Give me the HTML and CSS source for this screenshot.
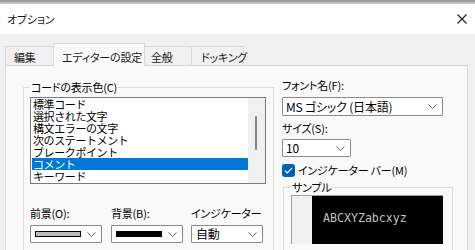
FILE: index.html
```html
<!DOCTYPE html>
<html lang="ja">
<head>
    <meta charset="UTF-8">
    <title>オプション</title>
    <link rel="stylesheet" href="styles.css">
</head>
<body>
    <div class="frame-edge"></div>
    <header class="titlebar">
        <span class="title">オプション</span>
        <svg class="close-icon" width="10" height="10" viewBox="0 0 10 10">
            <path d="M0.5 0.5 L9.5 9.5 M9.5 0.5 L0.5 9.5" stroke="#1b1b1b" stroke-width="1.1" fill="none"/>
        </svg>
    </header>

    <main class="dialog">
        <nav class="tabs">
            <span class="tab tab-edit">編集</span>
            <span class="tab tab-active">エディターの設定</span>
            <span class="tab tab-general">全般</span>
            <span class="tab tab-dock">ドッキング</span>
        </nav>

        <section class="tab-panel">
            <fieldset class="group group-colors">
                <legend>コードの表示色(C)</legend>
                <div class="listbox">
                    <ul class="list-items">
                        <li>標準コード</li>
                        <li>選択された文字</li>
                        <li>構文エラーの文字</li>
                        <li>次のステートメント</li>
                        <li>ブレークポイント</li>
                        <li class="selected">コメント</li>
                        <li>キーワード</li>
                    </ul>
                    <div class="scrollbar"><span class="thumb"></span></div>
                </div>

                <div class="pickers">
                    <div class="picker">
                        <label>前景(O):</label>
                        <div class="combo">
                            <span class="swatch swatch-gray"></span>
                            <svg class="chevron" width="9" height="5" viewBox="0 0 9 5"><polyline points="0.5,0.5 4.5,4.5 8.5,0.5" fill="none" stroke="#606060"/></svg>
                        </div>
                    </div>
                    <div class="picker">
                        <label>背景(B):</label>
                        <div class="combo">
                            <span class="swatch swatch-black"></span>
                            <svg class="chevron" width="9" height="5" viewBox="0 0 9 5"><polyline points="0.5,0.5 4.5,4.5 8.5,0.5" fill="none" stroke="#606060"/></svg>
                        </div>
                    </div>
                    <div class="picker">
                        <label>インジケーター</label>
                        <div class="combo">
                            <span class="combo-text">自動</span>
                            <svg class="chevron" width="9" height="5" viewBox="0 0 9 5"><polyline points="0.5,0.5 4.5,4.5 8.5,0.5" fill="none" stroke="#606060"/></svg>
                        </div>
                    </div>
                </div>
            </fieldset>

            <div class="font-column">
                <label class="field-label">フォント名(F):</label>
                <div class="combo combo-font">
                    <span class="combo-text">MS ゴシック (日本語)</span>
                    <svg class="chevron" width="9" height="5" viewBox="0 0 9 5"><polyline points="0.5,0.5 4.5,4.5 8.5,0.5" fill="none" stroke="#606060"/></svg>
                </div>

                <label class="field-label label-size">サイズ(S):</label>
                <div class="combo combo-size">
                    <span class="combo-text">10</span>
                    <svg class="chevron" width="9" height="5" viewBox="0 0 9 5"><polyline points="0.5,0.5 4.5,4.5 8.5,0.5" fill="none" stroke="#606060"/></svg>
                </div>

                <div class="check-row">
                    <span class="checkbox">
                        <svg width="9" height="7" viewBox="0 0 9 7"><polyline points="0.8,3.6 3.3,6 8.2,0.9" fill="none" stroke="#ffffff" stroke-width="1.2"/></svg>
                    </span>
                    <span>インジケーター バー(M)</span>
                </div>

                <fieldset class="group group-sample">
                    <legend>サンプル</legend>
                    <div class="sample">
                        <span class="sample-gutter"></span>
                        <span class="sample-code">ABCXYZabcxyz</span>
                    </div>
                </fieldset>
            </div>
        </section>
    </main>
</body>
</html>
```

FILE: styles.css
```css
* {
    box-sizing: border-box;
}

body {
    margin: 0;
    width: 475px;
    height: 250px;
    overflow: hidden;
    background: #f0f0f0;
    color: #000;
    font-family: "Noto Sans CJK JP", "Noto Sans", sans-serif;
    font-feature-settings: "palt" 1;
    font-size: 11px;
    letter-spacing: -0.2px;
    line-height: 14px;
    white-space: nowrap;
}

.frame-edge {
    height: 4px;
    background: linear-gradient(#8e8e8e, #cfcfcf);
}

.titlebar {
    height: 30px;
    background: #ffffff;
    display: flex;
    align-items: center;
    justify-content: space-between;
    padding: 0 8px 0 7px;
}

.title {
    color: #1a1a1a;
}

/* tabs */

.dialog {
    padding-left: 5px;
}

.tabs {
    display: flex;
    align-items: flex-end;
    height: 31px;
}

.tab {
    height: 19px;
    border: 1px solid #d9d9d9;
    border-bottom: none;
    background: #f0f0f0;
    margin-left: -1px;
    padding: 3px 0 0 8px;
    color: #1a1a1a;
}

.tab-edit {
    width: 49px;
    margin-left: 0;
}

.tab-active {
    position: relative;
    z-index: 1;
    width: 92px;
    height: 23px;
    margin-bottom: -1px;
    padding-top: 6px;
    background: #f9f9f9;
}

.tab-general {
    width: 48px;
    padding-left: 6px;
}

.tab-dock {
    width: 53px;
    padding-left: 9px;
}

.tab-panel {
    width: 463px;
    height: 200px;
    border: 1px solid #d9d9d9;
    background: #f9f9f9;
    display: flex;
    align-items: flex-start;
    padding: 12px 0 0 17px;
}

/* group boxes */

.group {
    margin: 0;
    border: 1px solid #dcdcdc;
    min-width: 0;
}

.group legend {
    padding: 0 1px;
    line-height: 14px;
}

.group-colors {
    width: 251px;
    height: 200px;
    margin-top: 2px;
    padding: 3px 6px 0 6px;
}

.listbox {
    display: flex;
    width: 236px;
    height: 87px;
    border: 1px solid #7a7a7a;
    background: #ffffff;
    overflow: hidden;
}

.list-items {
    list-style: none;
    margin: 0;
    padding: 0 0 0 1px;
    width: 217px;
    font-feature-settings: normal;
    letter-spacing: -0.4px;
}

.list-items li {
    height: 12px;
    line-height: 12px;
    font-size: 11px;
    padding-left: 1px;
}

.list-items .selected {
    background: #0078d7;
    color: #ffffff;
}

.scrollbar {
    width: 17px;
    background: #f0f0f0;
    padding: 18px 0 0 7px;
}

.thumb {
    display: block;
    width: 2px;
    height: 34px;
    border-radius: 1px;
    background: #858585;
}

/* colour pickers */

.pickers {
    display: grid;
    grid-template-columns: 81px 80px 72px;
    margin-top: 22px;
}

.picker label {
    display: block;
    height: 14px;
    margin-bottom: 5px;
}

.combo {
    display: flex;
    align-items: center;
    justify-content: space-between;
    width: 72px;
    height: 18px;
    background: #ffffff;
    border: 1px solid #8a8a8a;
    border-radius: 1px;
    padding: 0 5px 0 4px;
}

.combo-text {
    font-size: 12px;
    line-height: 14px;
}

.swatch {
    width: 46px;
    height: 6px;
    border: 1px solid #000000;
}

.swatch-gray {
    background: #c0c0c0;
}

.swatch-black {
    background: #000000;
}

.chevron {
    flex-shrink: 0;
}

/* font column */

.font-column {
    margin-left: 8px;
    display: flex;
    flex-direction: column;
    align-items: flex-start;
}

.field-label {
    display: block;
    height: 14px;
}

.combo-font {
    width: 161px;
    height: 19px;
    margin-top: 5px;
    padding-left: 3px;
}

.label-size {
    margin-top: 5px;
}

.combo-size {
    width: 69px;
    margin-top: 4px;
    padding-left: 3px;
}

.check-row {
    display: flex;
    align-items: center;
    gap: 3px;
    height: 14px;
    margin-top: 6px;
}

.checkbox {
    display: flex;
    align-items: center;
    justify-content: center;
    width: 13px;
    height: 13px;
    border-radius: 3px;
    background: #005fb8;
}

.group-sample {
    width: 170px;
    height: 90px;
    margin: 3px 0 0 1px;
    padding: 1px 0 0 7px;
}

.sample {
    display: flex;
    width: 152px;
    height: 49px;
    border-top: 1px solid #a0a0a0;
    border-left: 1px solid #a0a0a0;
}

.sample-gutter {
    width: 20px;
    background: #f0f0f0;
}

.sample-code {
    flex: 1;
    display: flex;
    align-items: center;
    padding: 0 0 4px 11px;
    background: #000000;
    color: #c0c0c0;
    font-family: "DejaVu Sans Mono", monospace;
    font-size: 11.6px;
    letter-spacing: 0;
    font-feature-settings: normal;
}
```
